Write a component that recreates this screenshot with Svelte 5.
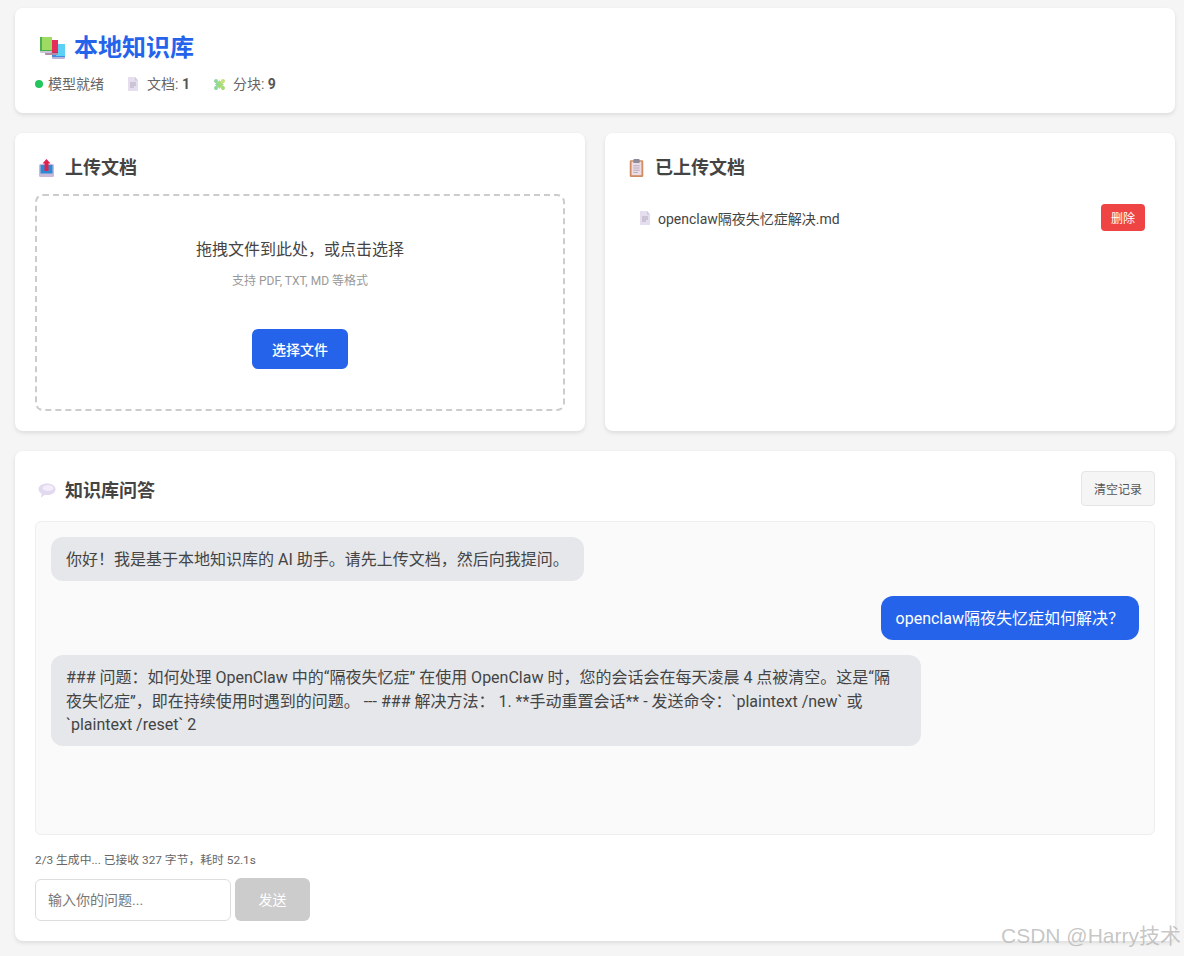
<script>
  let question = $state('');

  const messages = [
    { role: 'ai', text: '你好！我是基于本地知识库的 AI 助手。请先上传文档，然后向我提问。' },
    { role: 'user', text: 'openclaw隔夜失忆症如何解决？' },
    {
      role: 'ai',
      text: '### 问题：如何处理 OpenClaw 中的“隔夜失忆症” 在使用 OpenClaw 时，您的会话会在每天凌晨 4 点被清空。这是“隔夜失忆症”，即在持续使用时遇到的问题。 --- ### 解决方法： 1. **手动重置会话** - 发送命令：`plaintext /new` 或 `plaintext /reset` 2'
    }
  ];
</script>

{#snippet docIcon()}
  <svg class="ico-doc" viewBox="0 0 12 14" aria-hidden="true">
    <path d="M1 0h7l3 3.500V14H1z" fill="#e5deee" />
    <path d="M8 0l3 3.500H8z" fill="#cfc6dc" />
    <path d="M3 6h6M3 8h6M3 10h4" stroke="#aaa3b8" stroke-width="0.9" />
  </svg>
{/snippet}

<main class="page">
  <header class="card top">
    <h1>
      <svg class="ico-books" viewBox="0 0 25 22" aria-hidden="true">
        <rect x="12" y="7" width="13" height="15" rx="1" fill="#b9b4dc" />
        <rect x="12" y="7" width="13" height="13" fill="#3f8ce0" />
        <rect x="16" y="7" width="9" height="12" fill="#5bd2f5" />
        <rect x="5" y="3" width="13" height="15" rx="1" fill="#b58aa8" />
        <rect x="5" y="3" width="13" height="13" fill="#b8345f" />
        <rect x="9" y="3" width="9" height="12" fill="#e62e5c" />
        <rect x="0" y="0" width="12" height="16" rx="1" fill="#c9c6d8" />
        <rect x="0" y="0" width="12" height="14" fill="#4caf50" />
        <rect x="2" y="0" width="10" height="13" fill="#9edb62" />
      </svg>
      本地知识库
    </h1>
    <div class="stats">
      <span class="stat"><i class="dot"></i>模型就绪</span>
      <span class="stat">{@render docIcon()}<span>文档: <b>1</b></span></span>
      <span class="stat">
        <svg class="ico-puzzle" viewBox="0 0 15 15" aria-hidden="true">
          <g transform="rotate(45 7.500 7.500)">
            <rect x="4.500" y="4.500" width="6" height="6" fill="#a6dc78" />
            <circle cx="7.500" cy="2.600" r="2" fill="#c5e27a" />
            <circle cx="12.400" cy="7.500" r="2" fill="#a6dc78" />
            <circle cx="7.500" cy="12.400" r="2" fill="#8fd6a2" />
            <circle cx="2.600" cy="7.500" r="2" fill="#8fd6a2" />
            <rect x="4.500" y="7.500" width="3" height="3" fill="#8fd6a2" />
          </g>
        </svg>
        <span>分块: <b>9</b></span>
      </span>
    </div>
  </header>

  <div class="row">
    <section class="card panel">
      <h2>
        <svg class="ico-h" viewBox="0 0 15 18" aria-hidden="true">
          <rect x="0" y="5" width="15" height="13" rx="1.500" fill="#cbb9da" />
          <rect x="1.500" y="6" width="12" height="8.500" fill="#2f8ad6" />
          <path d="M7.500 0l4 4.500H9.500V12h-4V4.500H3.500z" fill="#e0214f" />
        </svg>
        上传文档
      </h2>
      <div class="drop">
        <p class="drop-title">拖拽文件到此处，或点击选择</p>
        <p class="drop-hint">支持 PDF, TXT, MD 等格式</p>
        <button class="primary">选择文件</button>
      </div>
    </section>

    <section class="card panel">
      <h2>
        <svg class="ico-h" viewBox="0 0 16 20" aria-hidden="true">
          <rect x="0.500" y="1.500" width="15" height="18.500" rx="1.500" fill="#d08b63" />
          <rect x="2.500" y="3" width="11" height="15" fill="#ecdde4" />
          <rect x="4.500" y="0" width="7" height="4.500" rx="1" fill="#8d8a99" />
          <path d="M4.500 7.500h7M4.500 10h7M4.500 12.500h7M4.500 15h5" stroke="#a99db5" stroke-width="0.9" />
        </svg>
        已上传文档
      </h2>
      <ul class="docs">
        <li>
          <span class="doc-name">{@render docIcon()}openclaw隔夜失忆症解决.md</span>
          <button class="danger">删除</button>
        </li>
      </ul>
    </section>
  </div>

  <section class="card chat">
    <div class="chat-head">
      <h2>
        <svg class="ico-bubble" viewBox="0 0 18 15" aria-hidden="true">
          <path d="M9 .500c4.800 0 8.500 2.200 8.500 5.800s-3.700 5.800-8.500 5.800c-.8 0-1.600 0-2.300-.2L3 14.500l.6-3.800C1.800 9.600.500 8.100.500 6.300.500 2.700 4.200.500 9 .500z" fill="#e2d9f0" />
          <ellipse cx="10" cy="5" rx="5.500" ry="3" fill="#f2edf8" />
        </svg>
        知识库问答
      </h2>
      <button class="ghost">清空记录</button>
    </div>

    <div class="messages">
      {#each messages as m}
        <div class="msg {m.role}">{m.text}</div>
      {/each}
    </div>

    <p class="status">2/3 生成中... 已接收 327 字节，耗时 52.1s</p>
    <div class="ask">
      <input bind:value={question} placeholder="输入你的问题..." />
      <button class="send" disabled>发送</button>
    </div>
  </section>

  <div class="mark">CSDN @Harry技术</div>
</main>

<style>
  :global(body) {
    margin: 0;
    background: #f5f5f5;
    color: #333;
    font-family: Roboto, "Noto Sans CJK SC", sans-serif;
  }

  .page {
    position: relative;
    box-sizing: border-box;
    height: 956px;
    overflow: hidden;
    padding: 8px 9px 0 15px;
    display: flex;
    flex-direction: column;
    gap: 20px;
  }

  .card {
    background: #fff;
    border-radius: 8px;
    box-shadow: 0 2px 4px rgba(0, 0, 0, 0.1);
    box-sizing: border-box;
  }

  .top {
    height: 105px;
    padding: 20px;
  }

  h1 {
    box-sizing: border-box;
    margin: 0;
    height: 38px;
    padding-top: 2px;
    display: flex;
    align-items: center;
    gap: 10px;
    font-size: 24px;
    line-height: 36px;
    font-weight: 700;
    color: #2563eb;
  }

  .ico-books {
    width: 25px;
    height: 22px;
    margin-left: 5px;
    margin-right: -1px;
  }

  .stats {
    display: flex;
    gap: 22px;
    margin-top: 8px;
    font-size: 14px;
    line-height: 20px;
    color: #666;
  }

  .stat {
    display: flex;
    align-items: center;
  }

  .stat b {
    color: #555;
  }

  .dot {
    width: 8px;
    height: 8px;
    margin-right: 5px;
    border-radius: 50%;
    background: #22c55e;
  }

  .ico-doc {
    width: 12px;
    height: 14px;
    margin: 0 8px 0 1px;
    flex-shrink: 0;
  }

  .ico-puzzle {
    width: 15px;
    height: 15px;
    margin-right: 6px;
  }

  .row {
    display: grid;
    grid-template-columns: 1fr 1fr;
    gap: 20px;
  }

  .panel {
    height: 298px;
    padding: 20px;
  }

  h2 {
    margin: 0;
    height: 26px;
    display: flex;
    align-items: center;
    gap: 10px;
    font-size: 18px;
    font-weight: 700;
    color: #444;
  }

  .ico-h {
    width: 15px;
    height: 18px;
    margin: 4px 1px 0 4px;
  }

  .drop {
    box-sizing: border-box;
    height: 217px;
    margin-top: 15px;
    border: 2px dashed #ccc;
    border-radius: 8px;
    display: flex;
    flex-direction: column;
    align-items: center;
    padding-top: 42px;
  }

  .drop p {
    margin: 0;
  }

  .drop-title {
    font-size: 16px;
    line-height: 24px;
    color: #444;
  }

  .drop .drop-hint {
    margin-top: 11px;
    font-size: 12px;
    line-height: 17px;
    color: #999;
  }

  button {
    font-family: inherit;
    border: none;
  }

  .primary {
    width: 96px;
    height: 40px;
    margin-top: 39px;
    border-radius: 6px;
    background: #2563eb;
    color: #fff;
    font-size: 14px;
    font-weight: 500;
  }

  .docs {
    list-style: none;
    margin: 0;
    padding: 0;
  }

  .docs li {
    display: flex;
    align-items: center;
    justify-content: space-between;
    margin-top: 25px;
    padding: 0 10px;
    height: 27px;
  }

  .doc-name {
    display: flex;
    align-items: center;
    padding-left: 3px;
    font-size: 14px;
    color: #444;
  }

  .doc-name .ico-doc {
    margin-right: 7px;
  }

  .danger {
    width: 44px;
    height: 27px;
    border-radius: 4px;
    background: #ef4444;
    color: #fff;
    font-size: 12px;
  }

  .chat {
    height: 490px;
    padding: 20px;
  }

  .chat-head {
    display: flex;
    align-items: center;
    justify-content: space-between;
    height: 35px;
  }

  .ico-bubble {
    width: 18px;
    height: 15px;
    margin: 4px -1px 0 3px;
  }

  .ghost {
    width: 74px;
    height: 35px;
    border: 1px solid #e5e5e5;
    border-radius: 4px;
    background: #f5f5f5;
    color: #555;
    font-size: 12px;
  }

  .messages {
    box-sizing: border-box;
    height: 314px;
    margin-top: 15px;
    padding: 15px;
    border: 1px solid #eee;
    border-radius: 6px;
    background: #fafafa;
    display: flex;
    flex-direction: column;
    gap: 15.250px;
  }

  .msg {
    max-width: 80%;
    box-sizing: border-box;
    padding: 11px 15px 9.250px;
    border-radius: 12px;
    font-size: 16px;
    line-height: 23.500px;
  }

  .msg.ai {
    align-self: flex-start;
    background: #e5e7eb;
    color: #444;
  }

  /* the long answer wraps a few px early */
  .msg.ai:last-child {
    padding-right: 18px;
  }

  .msg.user {
    align-self: flex-end;
    background: #2563eb;
    color: #fff;
  }

  .status {
    margin: 16px 0 0;
    font-size: 11.800px;
    line-height: 18px;
    color: #666;
  }

  .ask {
    display: flex;
    align-items: flex-end;
    gap: 4px;
    margin-top: 9px;
  }

  .ask input {
    box-sizing: border-box;
    width: 196px;
    height: 42px;
    padding: 0 12px;
    border: 1px solid #ddd;
    border-radius: 6px;
    outline: none;
    font-family: inherit;
    font-size: 14px;
  }

  .ask input::placeholder {
    color: #777;
  }

  .send {
    width: 75px;
    height: 43px;
    padding-bottom: 3px;
    border-radius: 6px;
    background: #ccc;
    color: #fff;
    font-size: 14px;
  }

  .mark {
    position: absolute;
    right: 3px;
    bottom: 6px;
    font-family: "Liberation Sans", "Noto Sans CJK SC", sans-serif;
    font-size: 21px;
    line-height: 28px;
    color: rgba(150, 150, 150, 0.55);
    text-shadow: 0 0 1px rgba(255, 255, 255, 0.6);
  }
</style>
